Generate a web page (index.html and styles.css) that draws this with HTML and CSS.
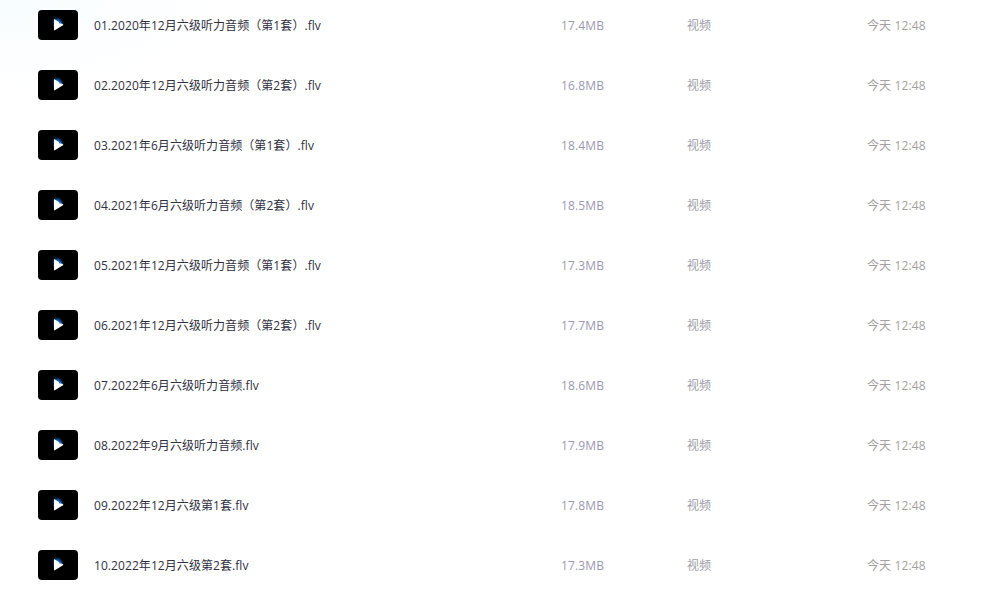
FILE: index.html
```html
<!DOCTYPE html>
<html lang="zh-CN">
<head>
<meta charset="utf-8">
<title>文件列表</title>
<link rel="stylesheet" href="styles.css">
</head>
<body>
<svg class="defs" width="0" height="0" aria-hidden="true">
  <defs>
    <filter id="soft" x="-40%" y="-40%" width="180%" height="180%">
      <feGaussianBlur stdDeviation="0.8"/>
    </filter>
    <filter id="fine" x="-40%" y="-40%" width="180%" height="180%">
      <feGaussianBlur stdDeviation="0.4"/>
    </filter>
    <symbol id="play" viewBox="0 0 40 30">
      <rect width="40" height="30" rx="4" fill="#000"/>
      <path d="M15.5 9 L21 8.5 L25 13 L16 17 Z" fill="#1c5fb4" filter="url(#soft)"/>
      <path d="M16 9.6 Q16 9 16.8 9.4 L25 14.2 Q25.6 14.8 25 15.3 L16.8 20.2 Q16 20.6 16 19.8 Z" fill="#fff"/>
      <path d="M20 11 L24.8 14 L21.5 13.6 Z" fill="#2f7fdc" filter="url(#fine)"/>
    </symbol>
  </defs>
</svg>
<ul class="list">
  <li class="row"><svg class="icon"><use href="#play"/></svg><span class="name">01.2020年12月六级听力音频（第1套）.flv</span><span class="size">17.4MB</span><span class="type">视频</span><span class="time">今天 12:48</span></li>
  <li class="row"><svg class="icon"><use href="#play"/></svg><span class="name">02.2020年12月六级听力音频（第2套）.flv</span><span class="size">16.8MB</span><span class="type">视频</span><span class="time">今天 12:48</span></li>
  <li class="row"><svg class="icon"><use href="#play"/></svg><span class="name">03.2021年6月六级听力音频（第1套）.flv</span><span class="size">18.4MB</span><span class="type">视频</span><span class="time">今天 12:48</span></li>
  <li class="row"><svg class="icon"><use href="#play"/></svg><span class="name">04.2021年6月六级听力音频（第2套）.flv</span><span class="size">18.5MB</span><span class="type">视频</span><span class="time">今天 12:48</span></li>
  <li class="row"><svg class="icon"><use href="#play"/></svg><span class="name">05.2021年12月六级听力音频（第1套）.flv</span><span class="size">17.3MB</span><span class="type">视频</span><span class="time">今天 12:48</span></li>
  <li class="row"><svg class="icon"><use href="#play"/></svg><span class="name">06.2021年12月六级听力音频（第2套）.flv</span><span class="size">17.7MB</span><span class="type">视频</span><span class="time">今天 12:48</span></li>
  <li class="row"><svg class="icon"><use href="#play"/></svg><span class="name">07.2022年6月六级听力音频.flv</span><span class="size">18.6MB</span><span class="type">视频</span><span class="time">今天 12:48</span></li>
  <li class="row"><svg class="icon"><use href="#play"/></svg><span class="name">08.2022年9月六级听力音频.flv</span><span class="size">17.9MB</span><span class="type">视频</span><span class="time">今天 12:48</span></li>
  <li class="row"><svg class="icon"><use href="#play"/></svg><span class="name">09.2022年12月六级第1套.flv</span><span class="size">17.8MB</span><span class="type">视频</span><span class="time">今天 12:48</span></li>
  <li class="row"><svg class="icon"><use href="#play"/></svg><span class="name">10.2022年12月六级第2套.flv</span><span class="size">17.3MB</span><span class="type">视频</span><span class="time">今天 12:48</span></li>
</ul>
</body>
</html>
```
FILE: styles.css
```css
html, body {
  margin: 0;
  height: 100%;
  overflow: hidden;
}
body {
  background: radial-gradient(ellipse 220px 90px at 0 0, #f7fdff 0%, #fcfeff 55%, #ffffff 100%);
  font-family: "Open Sans", "Noto Sans CJK SC", sans-serif;
  font-size: 12px;
  letter-spacing: 0.12px;
}
.defs {
  display: block;
}
.list {
  list-style: none;
  margin: 0;
  padding: 10px 0 0 38px;
  display: flex;
  flex-direction: column;
  gap: 30px;
}
.row {
  display: flex;
  align-items: flex-start;
  height: 30px;
  line-height: 32px;
}
.icon {
  width: 40px;
  height: 30px;
  flex: none;
  margin-right: 16px;
}
.name {
  width: 467px;
  flex: none;
  color: #30303f;
  letter-spacing: 0.07px;
}
.size {
  width: 126px;
  flex: none;
  color: #9c98b2;
}
.type {
  width: 180px;
  flex: none;
  color: #9e9ea6;
}
.time {
  flex: none;
  color: #a4a0a0;
}
```
